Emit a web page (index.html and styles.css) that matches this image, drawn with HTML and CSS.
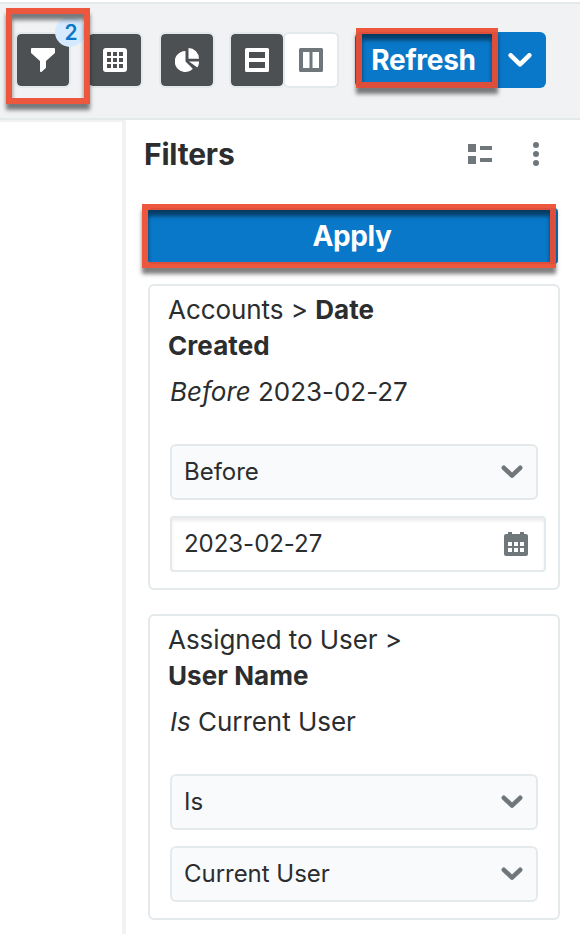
FILE: index.html
```html
<!DOCTYPE html>
<html lang="en">
<head>
<meta charset="utf-8">
<title>Filters</title>
<link rel="stylesheet" href="styles.css">
</head>
<body>
<header class="toolbar">
  <button class="tool filter-tool" aria-label="Filters">
    <svg class="icon" viewBox="0 0 24 24"><path fill="currentColor" d="M1 0h22q1 0 1 1v3.500q0 .6-.6 1L15 13v6.300q0 .6-.5 1L11 23.600Q9 25 9 22.500V13L.6 5.500Q0 5 0 4.400V1q0-1 1-1z"/></svg>
    <span class="count">2</span>
    <span class="marker marker-filter"></span>
  </button>
  <button class="tool" aria-label="Table">
    <svg class="icon" viewBox="0 0 24 24"><path fill="currentColor" fill-rule="evenodd" d="M3 0h18q3 0 3 3v18q0 3-3 3H3q-3 0-3-3V3q0-3 3-3zM4 4v4h4V4zM10 4v4h4V4zM16 4v4h4V4zM4 10v4h4v-4zM10 10v4h4v-4zM16 10v4h4v-4zM4 16v4h4v-4zM10 16v4h4v-4zM16 16v4h4v-4z"/></svg>
  </button>
  <button class="tool" aria-label="Chart">
    <svg class="icon" viewBox="0 0 24 24"><path fill="currentColor" d="M10.500 3v10.500l7.300 7.300A10.500 10.500 0 1 1 10.500 3zM13.500 0A10.700 10.700 0 0 1 24 10.700H13.500zM14 13.500h10a10 10 0 0 1-1.600 6z"/></svg>
  </button>
  <div class="layout-tools">
    <button class="tool" aria-label="Rows">
      <svg class="icon" viewBox="0 0 24 24"><path fill="currentColor" fill-rule="evenodd" d="M1.500 0h21q1.500 0 1.500 1.500v21q0 1.500-1.500 1.500h-21Q0 24 0 22.500v-21Q0 0 1.500 0zM4 4v6h16V4zM4 14v6h16v-6z"/></svg>
    </button>
    <button class="tool light" aria-label="Columns">
      <svg class="icon" viewBox="0 0 24 24"><path fill="currentColor" fill-rule="evenodd" d="M1.500 0h21q1.500 0 1.500 1.500v21q0 1.500-1.500 1.500h-21Q0 24 0 22.500v-21Q0 0 1.500 0zM4 4v16h6.500V4zM13.500 4v16H20V4z"/></svg>
    </button>
  </div>
  <div class="refresh">
    <button class="refresh-main">Refresh<span class="marker marker-refresh"></span></button>
    <button class="refresh-more" aria-label="More"><svg class="more-icon" viewBox="0 0 24 14"><path d="M2.700 2.300 12 11.300l9.300-9"/></svg></button>
  </div>
</header>
<main class="content">
  <div class="canvas"></div>
  <section class="panel">
    <div class="panel-head">
      <h1 class="title">Filters</h1>
      <svg class="list-icon" viewBox="0 0 24 20"><path fill="currentColor" d="M0 0h8v8H0zM12 2h12v4H12zM0 12h8v8H0zM12 14h12v4H12z"/></svg>
      <svg class="dots-icon" viewBox="0 0 6 24"><circle cx="3" cy="3" r="3"/><circle cx="3" cy="12" r="3"/><circle cx="3" cy="21" r="3"/></svg>
    </div>
    <button class="apply">Apply<span class="marker marker-apply"></span></button>
    <article class="card">
      <h2 class="field">Accounts &gt; <b>Date<br>Created</b></h2>
      <p class="summary"><i>Before</i> 2023-02-27</p>
      <div class="select"><span>Before</span><svg class="chevron" viewBox="0 0 22 14"><path d="M2.800 2.800 11 10.600l8.200-7.800"/></svg></div>
      <div class="date"><span>2023-02-27</span><svg class="icon" viewBox="0 0 24 24"><path fill="currentColor" fill-rule="evenodd" d="M4 0h4v2h8V0h4v2h2q2 0 2 2v18q0 2-2 2H2q-2 0-2-2V4q0-2 2-2h2zM4 10v4h4v-4zM10 10v4h4v-4zM16 10v4h4v-4zM4 16v4h4v-4zM10 16v4h4v-4zM16 16v4h4v-4z"/></svg></div>
    </article>
    <article class="card">
      <h2 class="field">Assigned to User &gt;<br><b>User Name</b></h2>
      <p class="summary"><i>Is</i> Current User</p>
      <div class="select"><span>Is</span><svg class="chevron" viewBox="0 0 22 14"><path d="M2.800 2.800 11 10.600l8.200-7.800"/></svg></div>
      <div class="select"><span>Current User</span><svg class="chevron" viewBox="0 0 22 14"><path d="M2.800 2.800 11 10.600l8.200-7.800"/></svg></div>
    </article>
  </section>
</main>
</body>
</html>
```
FILE: styles.css
```css
* { box-sizing: border-box; }
body {
  margin: 0;
  padding-top: 2px;
  height: 934px;
  overflow: hidden;
  display: flex;
  flex-direction: column;
  background: #fff;
  color: #2b2d2e;
  font-family: Inter, "Liberation Sans", sans-serif;
}
button { padding: 0; border: 0; font: inherit; }
svg { display: block; flex: none; }
.toolbar {
  height: 118px;
  flex: none;
  display: flex;
  align-items: flex-start;
  gap: 16px;
  padding: 28px 0 0 15px;
  background: #f0f2f4;
  border: solid #e4e9eb;
  border-width: 2px 0;
}
.tool {
  position: relative;
  width: 56px;
  height: 56px;
  flex: none;
  display: flex;
  align-items: center;
  justify-content: center;
  border: 2px solid #e4e9eb;
  border-radius: 6px;
  background: #4c5053;
  background-clip: padding-box;
  color: #fff;
}
.light { background: #fff; color: #6f777b; }
.icon { width: 24px; height: 24px; }
.layout-tools { display: flex; gap: 0; margin-left: -2px; }
.layout-tools .light { margin-left: -2px; }
.filter-tool { z-index: 2; }
.count {
  position: absolute;
  top: -17px;
  right: -16px;
  width: 30px;
  height: 30px;
  border-radius: 50%;
  background: #d6eaff;
  color: #0a78c9;
  font-size: 21px;
  font-weight: 600;
  line-height: 31px;
  text-align: center;
  text-indent: 2px;
}
.marker {
  position: absolute;
  z-index: 3;
  border: 6px solid rgba(236, 76, 50, .94);
  box-shadow: 0 6px 4px rgba(0, 0, 0, .5), inset 0 6px 4px rgba(0, 0, 0, .5);
  pointer-events: none;
}
.marker-filter { left: -11px; top: -26px; width: 84px; height: 96px; }
.refresh { display: flex; height: 56px; }
.refresh-main {
  position: relative;
  width: 137px;
  border-radius: 6px 0 0 6px;
  background: #0a78c9;
  color: #fff;
  font-size: 28px;
  font-weight: 700;
  letter-spacing: -.3px;
}
.marker-refresh { left: 1px; top: -4px; width: 142px; height: 60px; }
.refresh-more {
  width: 54px;
  display: flex;
  align-items: center;
  justify-content: center;
  padding-left: 2px;
  border-radius: 0 6px 6px 0;
  background: #0a78c9;
}
.more-icon, .chevron { fill: none; stroke-width: 4.600; stroke-linecap: round; stroke-linejoin: round; }
.more-icon { width: 24px; height: 14px; stroke: #fff; }
.chevron { width: 22px; height: 14px; margin-top: 2px; stroke: #6f777b; }
.content { flex: 1; display: flex; background: #f0f2f4; }
.canvas { width: 122px; margin: 2px 4px 0 0; background: #fff; }
.panel { flex: 1; padding: 0 20px 0 22px; background: #fff; }
.panel-head {
  height: 68px;
  display: flex;
  align-items: center;
  color: #6f777b;
}
.title { margin: 0 auto 0 -4px; color: #2b2d2e; font-size: 30px; line-height: 36px; font-weight: 700; letter-spacing: -.2px; }
.list-icon { width: 24px; height: 20px; margin-right: 41px; }
.dots-icon { width: 6px; height: 24px; margin-right: 21px; fill: currentColor; }
.apply {
  position: relative;
  display: block;
  width: 410px;
  height: 56px;
  margin: 20px 0;
  padding-right: 2px;
  border-radius: 4px;
  background: #0a78c9;
  color: #fff;
  font-size: 28px;
  font-weight: 700;
  letter-spacing: -.4px;
}
.marker-apply { left: -6px; top: -4px; width: 414px; height: 64px; }
.card {
  width: 412px;
  height: 306px;
  margin-bottom: 24px;
  padding: 6px 12px 0 18px;
  border: 2px solid #e4e9eb;
  border-radius: 6px;
}
.field { margin: 0; font-size: 26px; line-height: 36px; font-weight: 400; letter-spacing: -.06px; }
.field b { font-weight: 700; letter-spacing: .08px; }
.summary { margin: 10px 0 34px 2px; font-size: 26px; line-height: 36px; letter-spacing: -.03px; }
.select, .date {
  display: flex;
  align-items: center;
  justify-content: space-between;
  height: 56px;
  margin: 0 0 16px 2px;
  padding: 0 13px 2px 12px;
  border: 2px solid #e4e9eb;
  border-radius: 6px;
  font-size: 24px;
  letter-spacing: -.03px;
}
.select { width: 368px; background: #f8fafc; }
.date { width: 376px; padding: 0 16px 2px 12px; border-radius: 4px; box-shadow: inset 0 3px 3px #eeeeef; }
.date .icon { color: #6f777b; margin-top: 2px; }
```
